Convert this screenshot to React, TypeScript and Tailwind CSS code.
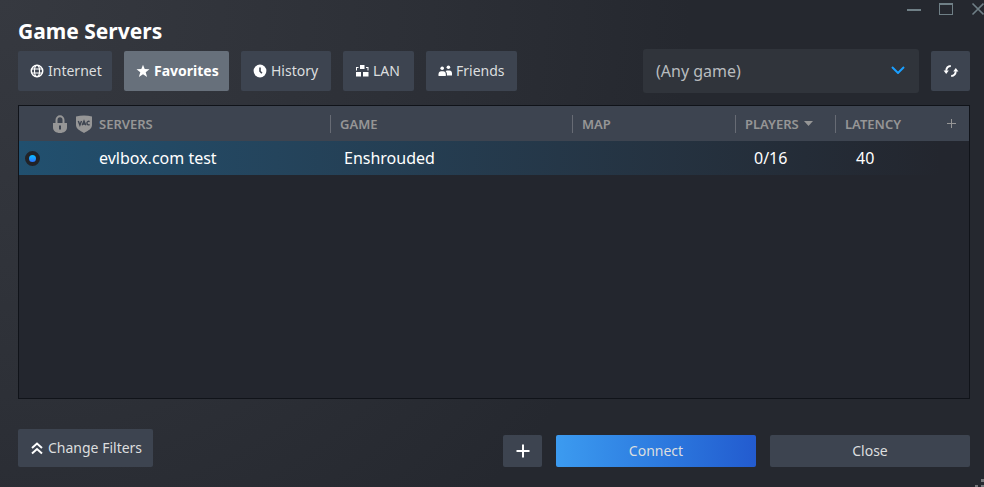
import type { ReactNode } from "react";

const buttonBase =
  "flex items-center rounded-[2px] bg-[#3d4450] text-[14px] leading-5 text-[#dcdedf] hover:bg-[#464d58]";

function GlobeIcon() {
  return (
    <svg viewBox="0 0 14 14" className="size-3.5 shrink-0" fill="none" stroke="#fff" aria-hidden="true">
      <circle cx="7" cy="7" r="5.700" strokeWidth="1.500" />
      <ellipse cx="7" cy="7" rx="2.500" ry="5.600" strokeWidth="1.200" />
      <path d="M1.500 5h11M1.500 9h11" strokeWidth="1.200" />
    </svg>
  );
}

function StarIcon() {
  return (
    <svg viewBox="0 0 14 14" className="size-3.5 shrink-0" fill="#fff" aria-hidden="true">
      <path d="M7 .7l1.700 4.400 4.800.2-3.800 2.900 1.400 4.700L7 10.200l-4.100 2.700 1.400-4.700L.5 5.300l4.800-.2z" />
    </svg>
  );
}

function ClockIcon() {
  return (
    <svg viewBox="0 0 14 14" className="size-3.5 shrink-0" aria-hidden="true">
      <circle cx="7" cy="7" r="6.400" fill="#fff" />
      <path d="M7 3.600v3.600l1.900 2.100" fill="none" stroke="#3d4450" strokeWidth="1.600" />
    </svg>
  );
}

function LanIcon() {
  return (
    <svg viewBox="0 0 14 14" className="size-3.5 shrink-0" fill="#fff" aria-hidden="true">
      <path d="M5 1h4.500v4H5zM1 8h5v4.500H1zM8 8h5.500v4.500H8z" />
      <path d="M1 3h2.500v1H2v2.500H1zM13.500 3H11v1h1.500v2.500h1z" />
    </svg>
  );
}

function FriendsIcon() {
  return (
    <svg viewBox="0 0 14 14" className="size-3.5 shrink-0" fill="#fff" aria-hidden="true">
      <circle cx="4.200" cy="4.300" r="1.800" />
      <circle cx="10.400" cy="3.300" r="1.800" />
      <path d="M.5 12v-1.700c0-1.800 1.100-3 2.700-3h2c1.600 0 2.600 1.200 2.600 3V12z" />
      <path d="M8.900 11.500H14V9.300c0-1.700-1-2.800-2.500-2.800H9.200c-.8 0-1.300.2-1.700.5.9.8 1.400 1.900 1.400 3.200z" />
    </svg>
  );
}

function RefreshIcon() {
  return (
    <svg viewBox="0 0 16 16" className="size-4" aria-hidden="true">
      <path d="M7.800 3C5 3.200 3.400 5 3.200 7.800M8.200 13c2.800-.2 4.400-2 4.600-4.800" fill="none" stroke="#fff" strokeWidth="1.900" />
      <path d="M.6 7.400h5.200L3.200 10.900zM15.400 8.600h-5.200l2.600-3.500z" fill="#fff" />
    </svg>
  );
}

function LockIcon() {
  return (
    <svg viewBox="0 0 14 18" className="h-[18px] w-3.5" role="img" aria-label="Password protected">
      <path d="M3.500 8.500V5a3.500 3.700 0 0 1 7 0v3.500" fill="none" stroke="#969696" strokeWidth="2" />
      <path fillRule="evenodd" d="M0 8h14v4.500c0 3.300-3 5.500-7 5.500s-7-2.200-7-5.500zM6 10.500v4h2v-4z" fill="#969696" />
    </svg>
  );
}

function VacIcon() {
  return (
    <svg viewBox="0 0 16 18" className="h-[18px] w-4" role="img" aria-label="VAC secured">
      <path d="M0 1.500C5 0 11 0 16 1.500V10c0 3.500-3.500 5.500-8 8-4.500-2.500-8-4.500-8-8z" fill="#969696" />
      <path d="M2.300 6l1.600 4 1.600-4M6.200 10.200L8 6l1.800 4.200M7 9h2M13.600 6.700c-1.300-.9-2.700-.1-2.700 1.400s1.400 2.300 2.700 1.400" fill="none" stroke="#3d4450" strokeWidth="1.400" />
    </svg>
  );
}

function Tab({
  label,
  icon,
  width,
  selected = false,
}: {
  label: string;
  icon: ReactNode;
  width: string;
  selected?: boolean;
}) {
  return (
    <button
      type="button"
      aria-pressed={selected}
      className={`${width} ${
        selected
          ? "flex h-10 items-center gap-1 rounded-[2px] bg-[#67707b] pl-3 text-[14px] leading-5 font-bold text-white"
          : `${buttonBase} h-10 gap-1 pl-3`
      }`}
    >
      {icon}
      {label}
    </button>
  );
}

function ColumnHead({ children }: { children: ReactNode }) {
  return (
    <th scope="col" className="p-0 font-semibold">
      <div className="flex h-[18px] items-center gap-[5px] border-l border-[#676b74] pl-[9px]">{children}</div>
    </th>
  );
}

export default function App() {
  return (
    <main className="flex min-h-screen flex-col bg-[radial-gradient(circle_at_top_left,#363940_0%,#2d3037_36%,#25282f_63%)] font-['Noto_Sans','Open_Sans',sans-serif]">
      <div className="flex h-[18px] items-start justify-end gap-[18px] overflow-hidden text-[#6f7f86]">
        <button type="button" aria-label="Minimize" className="shrink-0">
          <svg viewBox="0 0 14 18" className="h-[18px] w-3.5"><path d="M0 10h14" stroke="currentColor" strokeWidth="2" /></svg>
        </button>
        <button type="button" aria-label="Maximize" className="shrink-0">
          <svg viewBox="0 0 14 18" className="h-[18px] w-3.5"><path d="M0 3h14v12H0zM1 5v9h12V5z" fill="currentColor" fillRule="evenodd" /></svg>
        </button>
        <button type="button" aria-label="Close window" className="shrink-0">
          <svg viewBox="0 0 13 18" className="h-[18px] w-[13px]"><path d="M1.500 3.500l11 11M12.500 3.500l-11 11" stroke="currentColor" strokeWidth="1.600" /></svg>
        </button>
      </div>

      <div className="flex grow flex-col pr-3.5 pb-5 pl-[18px]">
        <h1 className="text-[21px] leading-[26px] font-bold text-white">Game Servers</h1>

        <div className="mt-[5px] flex items-center justify-between">
          <nav aria-label="Server lists" className="flex gap-3">
            <Tab label="Internet" icon={<GlobeIcon />} width="w-[94px]" />
            <Tab label="Favorites" icon={<StarIcon />} width="w-[105px]" selected />
            <Tab label="History" icon={<ClockIcon />} width="w-[90px]" />
            <Tab label="LAN" icon={<LanIcon />} width="w-[71px]" />
            <Tab label="Friends" icon={<FriendsIcon />} width="w-[91px]" />
          </nav>
          <div className="flex items-center gap-3">
            <div className="relative">
              <select aria-label="Game" className="h-11 w-[276px] appearance-none rounded-[3px] bg-[#30343b] pl-[13px] text-[16px] text-[#b8bcbf]">
                <option>(Any game)</option>
              </select>
              <svg viewBox="0 0 14 8" className="pointer-events-none absolute top-[17px] right-3.5 h-2 w-3.5" aria-hidden="true">
                <path d="M1 1l6 6 6-6" fill="none" stroke="#1a9fff" strokeWidth="2" />
              </svg>
            </div>
            <button type="button" aria-label="Refresh" className={`${buttonBase} h-10 w-[39px] justify-center`}>
              <RefreshIcon />
            </button>
          </div>
        </div>

        <section aria-label="Favorite servers" className="mt-3 grow border border-[#101319] bg-[#23262e]">
          <table className="w-full table-fixed border-collapse text-left">
            <colgroup>
              <col className="w-7" />
              <col className="w-[26px]" />
              <col className="w-[22px]" />
              <col />
              <col className="w-[242px]" />
              <col className="w-[163px]" />
              <col className="w-[100px]" />
              <col className="w-[100px]" />
              <col className="w-[34px]" />
            </colgroup>
            <thead>
              <tr className="h-[35px] bg-[#3d4450] text-[13px] leading-4 text-[#969696]">
                <td className="p-0" />
                <th scope="col" className="p-0"><span className="flex justify-center"><LockIcon /></span></th>
                <th scope="col" className="p-0"><span className="flex justify-center"><VacIcon /></span></th>
                <th scope="col" className="p-0 pl-1 font-semibold">SERVERS</th>
                <ColumnHead>GAME</ColumnHead>
                <ColumnHead>MAP</ColumnHead>
                <ColumnHead>
                  PLAYERS
                  <svg viewBox="0 0 9 5" className="h-[5px] w-[9px]" fill="currentColor" aria-hidden="true"><path d="M0 0h9L4.500 5z" /></svg>
                </ColumnHead>
                <ColumnHead>LATENCY</ColumnHead>
                <td className="p-0">
                  <button type="button" aria-label="Add column" className="flex h-[18px] w-8 items-center justify-center">
                    <svg viewBox="0 0 9 9" className="size-[9px]" aria-hidden="true"><path d="M4.500 0v9M0 4.500h9" stroke="#969696" /></svg>
                  </button>
                </td>
              </tr>
            </thead>
            <tbody>
              <tr className="h-[34px] bg-linear-to-r from-[#21506f] to-[#23262e] to-97% text-[16px] leading-6 text-white">
                <td className="p-0 pl-1.5">
                  <input
                    type="radio"
                    name="server"
                    defaultChecked
                    aria-label="evlbox.com test"
                    className="block size-[15px] appearance-none rounded-full border-4 border-[#212328] bg-linear-to-b from-[#06bfff] to-[#2d73ff]"
                  />
                </td>
                <td className="p-0" />
                <td className="p-0" />
                <td className="p-0 pl-1">evlbox.com test</td>
                <td className="p-0 pl-3.5">Enshrouded</td>
                <td className="p-0" />
                <td className="p-0 pl-[19px]">0/16</td>
                <td className="p-0 pl-[21px]">40</td>
                <td className="p-0" />
              </tr>
            </tbody>
          </table>
        </section>

        <footer className="mt-[30px] flex items-end justify-between">
          <button type="button" className={`${buttonBase} h-[38px] w-[135px] gap-1 pl-3`}>
            <svg viewBox="0 0 14 14" className="size-3.5 shrink-0" fill="none" stroke="#fff" strokeWidth="2" aria-hidden="true">
              <path d="M2 7l5-4.500L12 7M2 12.500L7 8l5 4.500" />
            </svg>
            Change Filters
          </button>
          <div className="flex gap-3.5">
            <button type="button" aria-label="Add a server" className={`${buttonBase} h-8 w-[39px] justify-center`}>
              <svg viewBox="0 0 14 14" className="size-3.5" aria-hidden="true"><path d="M7 .5v13M.5 7h13" stroke="#fff" strokeWidth="2" /></svg>
            </button>
            <button type="button" className="h-8 w-[200px] rounded-[2px] bg-linear-to-r from-[#3c9bf0] to-[#235bcf] text-[14px] leading-5 text-[#dcdedf]">
              Connect
            </button>
            <button type="button" className={`${buttonBase} h-8 w-[200px] justify-center`}>Close</button>
          </div>
        </footer>
      </div>

      <svg viewBox="0 0 9 9" className="pointer-events-none fixed right-0 bottom-0 size-[9px]" fill="#75777b" aria-hidden="true">
        <path d="M6 1h3v3H6zM6 7h3v2H6zM0 7h3v2H0z" />
      </svg>
    </main>
  );
}
